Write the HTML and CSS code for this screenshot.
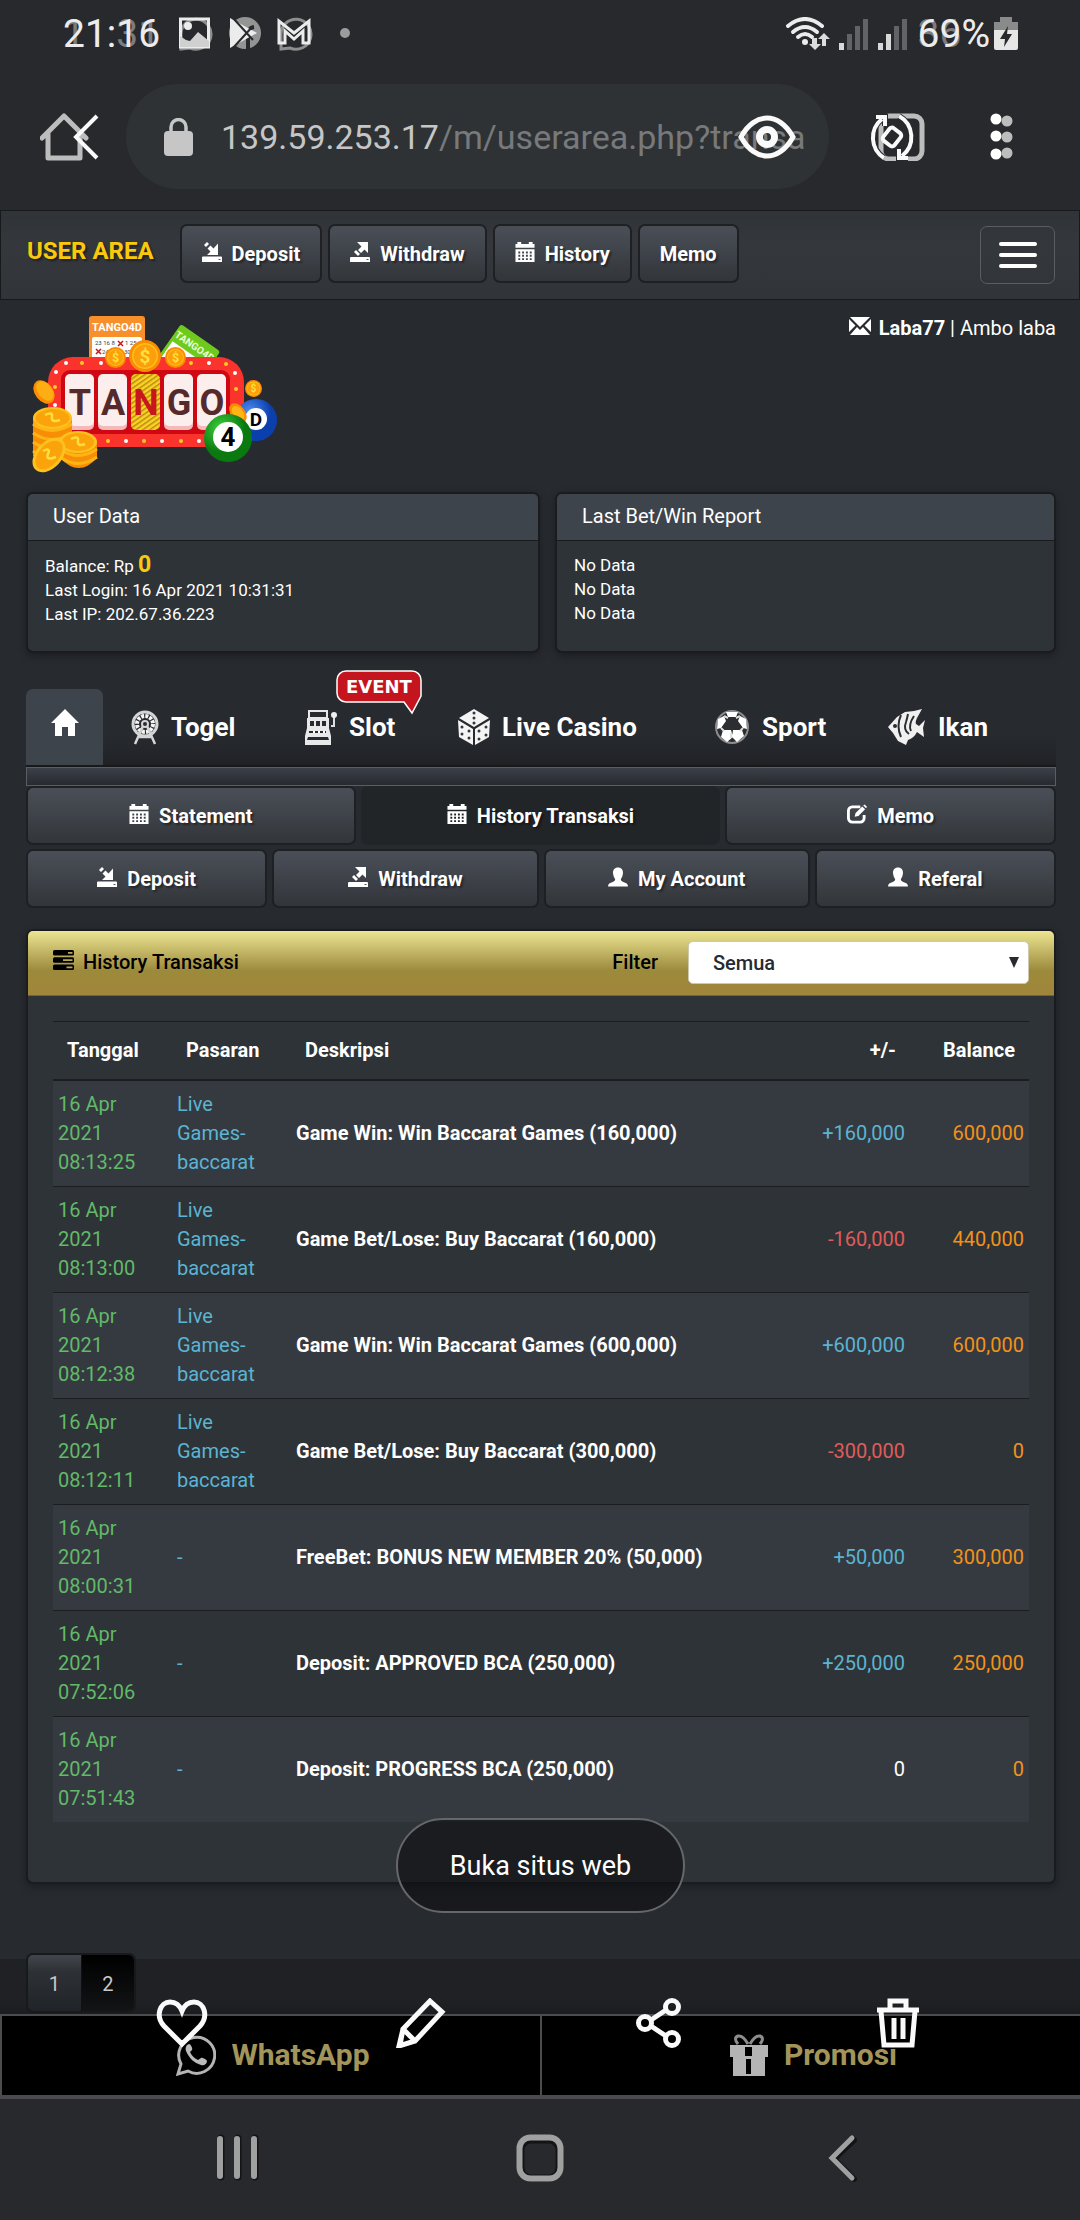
FILE: index.html
```html
<!DOCTYPE html>
<html lang="id">
<head>
    <meta charset="UTF-8">
    <meta name="viewport" content="width=device-width, initial-scale=1.0">
    <title>History Transaksi</title>
    <link rel="stylesheet" href="styles.css">
</head>
<body>
    <!-- icon set -->
    <svg class="icon-set" aria-hidden="true">
        <symbol id="i-deposit" viewBox="0 0 20 20">
            <path d="M1 14.5h18a1 1 0 0 1 1 1V20H0v-4.500a1 1 0 0 1 1-1zM16 1.500V13H5l3.500-3.500L5.500 6.500l3-3 3 3z"/>
            <path d="M2 3l3-3 2 2-3 3z"/><path d="M16.500 17h2v1h-2z" fill="#555"/>
        </symbol>
        <symbol id="i-withdraw" viewBox="0 0 20 20">
            <path d="M1 15h18a1 1 0 0 1 1 1v4H0v-4a1 1 0 0 1 1-1zM7 0h11v11l-3.500-3.500-3.500 3.500-3-3 3.500-3.500z"/>
            <path d="M4 10l2-2 4 4-2 2z"/><path d="M16.500 17h2v1h-2z" fill="#555"/>
        </symbol>
        <symbol id="i-calendar" viewBox="0 0 20 21">
            <path d="M0 2h2V0h4v2h8V0h4v2h2v4H0z"/><path fill-rule="evenodd" d="M0 7.500h20V21H0zM3 10v2h2v-2zM7 10v2h2v-2zM11 10v2h2v-2zM15 10v2h2v-2zM3 13.500v2h2v-2zM7 13.500v2h2v-2zM11 13.500v2h2v-2zM15 13.500v2h2v-2zM3 17v2h2v-2zM7 17v2h2v-2zM11 17v2h2v-2zM15 17v2h2v-2z"/>
        </symbol>
        <symbol id="i-edit" viewBox="0 0 21 20">
            <path d="M14 2.500H5.500a4 4 0 0 0-4 4v8a4 4 0 0 0 4 4H14a4 4 0 0 0 4-4V11" fill="none" stroke="currentColor" stroke-width="3"/>
            <path d="M8 13l1-4 7-7 3 3-7 7zM17 1l1.500-1L21 2.500 20 4z"/>
        </symbol>
        <symbol id="i-user" viewBox="0 0 21 20">
            <path d="M10.500 0c3.500 0 5.500 2.500 5.200 6-.3 3-1.200 4.500-2.200 6.200 0 1.800.5 2.300 2.500 3 3 1 5 1.800 5 4.800H0c0-3 2-3.800 5-4.800 2-.7 2.500-1.200 2.500-3C6.500 10.500 5.600 9 5.300 6 5 2.500 7 0 10.500 0z"/>
        </symbol>
        <symbol id="i-tasks" viewBox="0 0 21 20">
            <rect width="21" height="5.500" rx="1.500"/><rect y="7.200" width="21" height="5.500" rx="1.500"/><rect y="14.500" width="21" height="5.500" rx="1.500"/>
            <path d="M15 2h4.500v1.800H15zM10 9.200h9.500V11H10zM13.500 16.500h6v1.800h-6z" fill="#b5a75a"/>
        </symbol>
    </svg>

    <header class="phone-top">
        <div class="status">
            <span class="overlap time"><span class="ghost">11:31</span><span>21:16</span></span>
            <svg class="status-icons" viewBox="0 0 180 36">
                <g fill="none" stroke="#8e8e8e" stroke-width="3"><path d="M5 33V19a15 15 0 1 1 9 13z"/><path d="M105 33V19a15 15 0 1 1 9 13z"/></g>
                <path d="M4.500 3h28v28h-28z" fill="none" stroke="#ececec" stroke-width="3"/>
                <circle cx="12" cy="10" r="4" fill="#ececec"/><path d="M4 31V20l6 4 4 1 8-9 11 9v6z" fill="#d0d0d0"/>
                <circle cx="69" cy="17" r="16" fill="#949494"/><path d="M72 33V22q-1-10 6-11" stroke="#28292d" stroke-width="4" fill="none"/>
                <path d="M54 2l27 15-27 15z" fill="#ececec"/><path d="M57 2l20 22M57 32l20-22" stroke="#28292d" stroke-width="2"/>
                <path d="M103 27V5l15 12 15-12v22h-6V15l-9 8-9-8v12z" fill="none" stroke="#ececec" stroke-width="3"/>
                <circle cx="169" cy="17" r="5" fill="#9c9c9c"/>
            </svg>
            <svg class="status-right" viewBox="0 0 122 34">
                <g fill="none" stroke="#ececec" stroke-width="4" stroke-linecap="round"><path d="M2 9q17-14 34 0"/><path d="M7 15q12-10 24 0"/><path d="M12 20q7-6 14 0"/></g>
                <circle cx="19" cy="25" r="3" fill="#ececec"/>
                <path d="M26 21h5v6h4l-6 6-6-6h3zM36 29V22h-4l6-6 6 6h-4v7z" fill="#dcdcdc"/>
                <g fill="#626366"><path d="M61 17h5v16h-5zM69 9h5v24h-5zM77 2h5v31h-5zM108 9h5v24h-5zM116 2h5v31h-5z"/></g>
                <path d="M53 26h5v7h-5zM92 26h5v7h-5zM100 17h5v16h-5z" fill="#d8d8d8"/>
            </svg>
            <span class="overlap percent"><span class="ghost">36%</span><span>69%</span></span>
            <svg class="battery" viewBox="0 0 24 34">
                <path d="M6 0h12v5h6v9H0V5h6z" fill="#8a8a8a"/><path d="M0 13h24v18a2 2 0 0 1-2 2H2a2 2 0 0 1-2-2z" fill="#e6e6e6"/><path d="M14 9L6 22h5l-1 8 8-13h-5z" fill="#28292d"/>
            </svg>
        </div>
        <div class="browser">
            <a class="home" href="#" aria-label="Home">
                <svg viewBox="0 0 60 50">
                    <path d="M2 26L24 4l22 22M8 22v24h32V22" fill="none" stroke="#bdbdbd" stroke-width="5" stroke-linejoin="round" stroke-linecap="round"/>
                    <path d="M57 4L36 25l21 21" fill="none" stroke="#fafafa" stroke-width="4"/>
                </svg>
            </a>
            <div class="url">
                <svg class="lock" viewBox="0 0 29 38"><path d="M7 15V9a7.500 7.500 0 0 1 15 0v6" fill="none" stroke="#c6c6c6" stroke-width="3.500"/><rect y="13" width="29" height="25" rx="4" fill="#c6c6c6"/></svg>
                <span class="address">139.59.253.17<span class="path">/m/userarea.php?transa</span></span>
                <svg class="eye" viewBox="0 0 58 44">
                    <path d="M3 22C10 9 20 3 29 3s19 6 26 19c-7 13-17 19-26 19S10 35 3 22z" fill="none" stroke="#fafafa" stroke-width="5"/>
                    <circle cx="29" cy="22" r="7.500" fill="none" stroke="#fafafa" stroke-width="7"/>
                </svg>
            </div>
            <button class="rotate" aria-label="Tabs">
                <svg viewBox="0 0 56 48">
                    <rect x="12" y="3" width="41" height="43" rx="8" fill="none" stroke="#bdbdbd" stroke-width="5"/>
                    <path d="M13 6A24 24 0 0 0 15 45M30 3a24 24 0 0 1 3 40M7 4h9v9M39 45h-9v-9" fill="none" stroke="#28292d" stroke-width="6"/>
                    <path d="M13 6A24 24 0 0 0 15 45M30 3a24 24 0 0 1 3 40M7 4h9v9M39 45h-9v-9" fill="none" stroke="#fafafa" stroke-width="4"/>
                    <rect x="15" y="17" width="16" height="14" rx="3" transform="rotate(-52 23 24)" fill="#28292d" stroke="#fafafa" stroke-width="4"/>
                </svg>
            </button>
            <button class="more" aria-label="More">
                <svg viewBox="0 0 24 48"><g fill="#bdbdbd"><circle cx="17" cy="8" r="5.500"/><circle cx="17" cy="24" r="5.500"/><circle cx="17" cy="40" r="5.500"/></g><g fill="#fff"><circle cx="6" cy="6" r="5.500"/><circle cx="6" cy="23" r="5.500"/><circle cx="6" cy="41" r="5.500"/></g></svg>
            </button>
        </div>
    </header>

    <nav class="navbar">
        <a class="brand" href="#">USER AREA</a>
        <a class="btn" href="#"><svg><use href="#i-deposit"/></svg>Deposit</a>
        <a class="btn" href="#"><svg><use href="#i-withdraw"/></svg>Withdraw</a>
        <a class="btn" href="#"><svg><use href="#i-calendar"/></svg>History</a>
        <a class="btn" href="#">Memo</a>
        <button class="toggle" aria-label="Menu"><span></span><span></span><span></span></button>
    </nav>

    <main>
        <div class="masthead">
            <svg class="logo" viewBox="0 0 246 157" role="img" aria-label="TANGO4D">
                <defs>
                    <symbol id="coin" viewBox="-16 -16 32 32"><circle r="16" fill="#fb8c04"/><circle r="13" fill="#fbc11c"/><circle r="11.500" fill="#fd9f0b"/><text y="7" font-size="19" font-weight="700" text-anchor="middle" fill="#fee13d">$</text></symbol>
                    <radialGradient id="green" cx=".35" cy=".3"><stop offset="0" stop-color="#3fd13c"/><stop offset="1" stop-color="#0a7a10"/></radialGradient>
                    <radialGradient id="blue" cx=".35" cy=".3"><stop offset="0" stop-color="#4f8df0"/><stop offset="1" stop-color="#0b3fae"/></radialGradient>
                    <pattern id="stripes" width="4" height="4" patternUnits="userSpaceOnUse" patternTransform="rotate(-35)"><rect width="4" height="4" fill="#fbd324"/><rect width="4" height="1.500" fill="#b98a14"/></pattern>
                </defs>
                <rect x="57" width="56" height="50" rx="3" fill="#f78f2b"/>
                <text x="85" y="15" font-size="11" font-weight="700" text-anchor="middle" fill="#fff">TANGO4D</text>
                <rect x="60" y="21" width="50" height="26" rx="2" fill="#fff"/>
                <g font-size="6" fill="#444"><text x="63" y="29">23 16 8</text><text x="93" y="29">1 25</text><text x="70" y="38">24</text><text x="92" y="38">30</text></g>
                <path d="M86 25l5 5m0-5l-5 5M64 33l5 5m0-5l-5 5" stroke="#c2161e" stroke-width="1.500"/>
                <g transform="rotate(35 149 8)"><rect x="149" y="8" width="48" height="42" rx="3" fill="#6ecb1e"/><text x="173" y="22" font-size="10" font-weight="700" text-anchor="middle" fill="#eaffd8">TANGO4D</text><rect x="152" y="27" width="42" height="20" fill="#fff"/></g>
                <rect x="16" y="41" width="196" height="90" rx="25" fill="#fb332d"/>
                <rect x="29" y="54" width="169" height="64" rx="9" fill="#cf0712"/>
                <g fill="#fff"><circle cx="34" cy="47" r="2"/><circle cx="69" cy="47" r="2"/><circle cx="177" cy="47" r="2"/><circle cx="24" cy="56" r="2"/><circle cx="203" cy="57" r="2"/><circle cx="23" cy="89" r="2"/><circle cx="94" cy="125" r="2"/><circle cx="130" cy="125" r="2"/><circle cx="167" cy="125" r="2"/></g>
                <g fill="#ffc928"><circle cx="50" cy="47" r="2"/><circle cx="159" cy="47" r="2"/><circle cx="194" cy="48" r="2"/><circle cx="204" cy="73" r="2"/><circle cx="23" cy="71" r="2"/><circle cx="76" cy="125" r="2"/><circle cx="112" cy="125" r="2"/><circle cx="149" cy="125" r="2"/></g>
                <g fill="#f3b9bb"><rect x="33" y="60" width="29" height="54" rx="5"/><rect x="66" y="60" width="29" height="54" rx="5"/><rect x="132" y="60" width="29" height="54" rx="5"/><rect x="165" y="60" width="29" height="54" rx="5"/></g>
                <g fill="#fdeeee"><rect x="33" y="58" width="29" height="52" rx="5"/><rect x="66" y="58" width="29" height="52" rx="5"/><rect x="132" y="58" width="29" height="52" rx="5"/><rect x="165" y="58" width="29" height="52" rx="5"/></g>
                <rect x="99" y="58" width="29" height="56" rx="5" fill="url(#stripes)"/>
                <g class="reels" text-anchor="middle"><text x="48" y="99">T</text><text x="81" y="99">A</text><text class="hit" x="114" y="99">N</text><text x="147" y="99">G</text><text x="180" y="99">O</text></g>
                <use href="#coin" x="73" y="31" width="21" height="21"/><use href="#coin" x="133" y="31" width="21" height="21"/><use href="#coin" x="97" y="24" width="32" height="32"/>
                <use href="#coin" x="213" y="64" width="17" height="17"/>
                <ellipse cx="12" cy="76" rx="9" ry="13" transform="rotate(-38 12 76)" fill="#fb8c04"/><ellipse cx="13" cy="75" rx="7" ry="11" transform="rotate(-38 13 75)" fill="#fdae13"/>
                <circle cx="224" cy="104" r="21" fill="url(#blue)"/><circle cx="224" cy="103" r="11" fill="#fff"/><text x="224" y="110" font-size="19" font-weight="700" text-anchor="middle">D</text>
                <ellipse cx="206" cy="97" rx="7" ry="11" transform="rotate(-38 206 97)" fill="#fb8c04"/><ellipse cx="206" cy="97" rx="5" ry="8" transform="rotate(-38 206 97)" fill="#fdb515"/>
                <circle cx="196" cy="122" r="24" fill="url(#green)"/><circle cx="196" cy="121" r="15" fill="#fff"/><text x="196" y="130" font-size="26" font-weight="700" text-anchor="middle">4</text>
                <path d="M1 102h39v38H1z" fill="#f88e05"/><path d="M1 108q19 13 39 0M1 117q19 13 39 0M1 126q19 13 39 0M1 135q19 13 39 0" fill="none" stroke="#fdb515" stroke-width="3"/>
                <ellipse cx="20.500" cy="102" rx="19.500" ry="11" fill="#fdc21e"/><ellipse cx="20.500" cy="102" rx="17" ry="9" fill="#fba30a"/><path d="M13 99q8-4 7 2t8 3" fill="none" stroke="#fede3b" stroke-width="2.500"/>
                <path d="M28 126h37v16q-18 20-37 0z" fill="#f88e05"/><path d="M28 133q18 13 37 0M28 141q18 13 37 0" fill="none" stroke="#fdb515" stroke-width="3"/>
                <ellipse cx="46" cy="126" rx="19" ry="11" fill="#fdc21e"/><ellipse cx="46" cy="126" rx="16" ry="9" fill="#fba30a"/><path d="M39 123q8-4 7 2t7 3" fill="none" stroke="#fede3b" stroke-width="2.500"/>
                <ellipse cx="17" cy="139" rx="13" ry="20" transform="rotate(42 17 139)" fill="#fdc21e"/><ellipse cx="17" cy="139" rx="10" ry="17" transform="rotate(42 17 139)" fill="#fba30a"/><path d="M11 135q8-4 5 3t8 3" fill="none" stroke="#fede3b" stroke-width="2.500"/>
            </svg>
            <div class="account">
                <svg viewBox="0 0 22 18"><path d="M1 0h20L11 10zM0 2l6.500 6.500L0 15zM22 2v13l-6.500-6.500zM1 18l7-8 3 3 3-3 7 8z"/></svg>
                <strong>Laba77</strong> | Ambo laba
            </div>
        </div>

        <div class="info">
            <section class="card">
                <h2>User Data</h2>
                <p>Balance: Rp <b class="amount">0</b><br>Last Login: 16 Apr 2021 10:31:31<br>Last IP: 202.67.36.223</p>
            </section>
            <section class="card">
                <h2>Last Bet/Win Report</h2>
                <p>No Data<br>No Data<br>No Data</p>
            </section>
        </div>

        <nav class="tabs">
            <a class="tab active" href="#" aria-label="Home"><svg viewBox="0 0 28 27" width="28" height="27"><path d="M14 0l14 14h-4v13h-7v-9h-6v9H4V14H0z" fill="#fff"/></svg></a>
            <a class="tab" href="#">
                <svg viewBox="0 0 28 35" width="28" height="35" fill="none" stroke="#d5d5d5"><circle cx="14" cy="14" r="12" stroke-width="3"/><circle cx="14" cy="14" r="8" stroke="#f5f5f5" stroke-width="4" stroke-dasharray="3 1.200"/><circle cx="14" cy="14" r="3" stroke-width="2"/><path d="M12 16L4 34M16 16l8 18M7 27h14" stroke-width="2.500"/></svg>Togel
            </a>
            <a class="tab" href="#">
                <svg viewBox="0 0 32 35" width="32" height="35"><path fill-rule="evenodd" fill="#e8e8e8" d="M3 0h20v8h1v10l2 8v9H0v-9l2-8V8h1zM5 2v5h16V2zM5 11v5h4v-5zM11 11v5h4v-5zM17 11v5h4v-5zM4 21v2h17v-2zM3 27l-1 3h22l-1-3z"/><path d="M26 16h3V6" stroke="#ddd" stroke-width="2" fill="none"/><circle cx="29" cy="5" r="3" fill="#eee"/><path d="M8 22h2M13 22h2M18 22h2" stroke="#fff" stroke-width="2"/></svg>Slot
                <span class="event"><svg viewBox="0 0 88 46"><path d="M11 1h66a9 9 0 0 1 9 9v16l-9 17-8-11H11a9 9 0 0 1-9-9V10a9 9 0 0 1 9-9z" fill="#c4151f" stroke="#fff" stroke-width="1.500"/></svg><b>EVENT</b></span>
            </a>
            <a class="tab" href="#">
                <svg viewBox="0 0 32 36" width="32" height="36"><path d="M16 0l15 9-15 9L1 9zM0 11l15 9v16L1 28zM32 11l-15 9v16l14-8z" fill="#f4f4f4"/><g fill="#33363b"><circle cx="16" cy="4" r="1.500"/><circle cx="16" cy="9" r="1.500"/><circle cx="16" cy="14" r="1.500"/><circle cx="4" cy="18" r="1.500"/><circle cx="11" cy="22" r="1.500"/><circle cx="4" cy="25" r="1.500"/><circle cx="11" cy="29" r="1.500"/><circle cx="21" cy="22" r="1.500"/><circle cx="28" cy="18" r="1.500"/><circle cx="21" cy="30" r="1.500"/><circle cx="28" cy="26" r="1.500"/></g></svg>Live Casino
            </a>
            <a class="tab" href="#">
                <svg viewBox="0 0 36 36" width="36" height="36"><circle cx="18" cy="18" r="16" fill="#2b2d31" stroke="#8b8d90" stroke-width="2"/><path d="M12 3h12l-2 5h-8zM4 10l6-3 2 5-5 7-4 1zM32 10l-6-3-2 5 5 7 4 1zM9 21h8l2 7-6 5-6-5zM19 21h9l2 6-7 6-5-5z" fill="#fff"/><path d="M10 7l4 2M26 7l-4 2M17 24v5M7 19l3 3M29 19l-3 3" stroke="#ddd" stroke-width="2"/></svg>Sport
            </a>
            <a class="tab" href="#">
                <svg viewBox="0 0 38 36" width="38" height="36">
                    <path d="M0 18L9 8l8-5 9-1 8-2-5 9q-2 4-1 6l3 2 6-6-2 8 1 9-7-5q-3 6-9 8l-2 5-8-4-5-8z" fill="#f0f0f0"/>
                    <path d="M13 6q-5 11 0 22M20 5q-1 5-2 8-3 8 3 12M26 7q-6 9-3 15" stroke="#2b2d31" stroke-width="2" fill="none"/>
                    <circle cx="7" cy="17" r="2" fill="#2b2d31"/>
                </svg>Ikan
            </a>
        </nav>
        <div class="strip"></div>

        <div class="menu three">
            <a class="btn" href="#"><svg><use href="#i-calendar"/></svg>Statement</a>
            <a class="btn current" href="#"><svg><use href="#i-calendar"/></svg>History Transaksi</a>
            <a class="btn" href="#"><svg><use href="#i-edit"/></svg>Memo</a>
        </div>
        <div class="menu four">
            <a class="btn" href="#"><svg><use href="#i-deposit"/></svg>Deposit</a>
            <a class="btn" href="#"><svg><use href="#i-withdraw"/></svg>Withdraw</a>
            <a class="btn" href="#"><svg><use href="#i-user"/></svg>My Account</a>
            <a class="btn" href="#"><svg><use href="#i-user"/></svg>Referal</a>
        </div>

        <section class="history">
            <div class="history-head">
                <h2><svg><use href="#i-tasks"/></svg>History Transaksi</h2>
                <label for="filter">Filter</label>
                <div class="select"><select id="filter"><option>Semua</option><option>Deposit</option><option>Withdraw</option></select><span class="arrow"></span></div>
            </div>
            <div class="history-body">
                <table>
                    <thead>
                        <tr><th>Tanggal</th><th>Pasaran</th><th>Deskripsi</th><th class="num">+/-</th><th class="num">Balance</th></tr>
                    </thead>
                    <tbody>
                        <tr><td class="date">16 Apr 2021 08:13:25</td><td class="market">Live Games-baccarat</td><td class="desc">Game Win: Win Baccarat Games (160,000)</td><td class="num plus">+160,000</td><td class="num bal">600,000</td></tr>
                        <tr><td class="date">16 Apr 2021 08:13:00</td><td class="market">Live Games-baccarat</td><td class="desc">Game Bet/Lose: Buy Baccarat (160,000)</td><td class="num minus">-160,000</td><td class="num bal">440,000</td></tr>
                        <tr><td class="date">16 Apr 2021 08:12:38</td><td class="market">Live Games-baccarat</td><td class="desc">Game Win: Win Baccarat Games (600,000)</td><td class="num plus">+600,000</td><td class="num bal">600,000</td></tr>
                        <tr><td class="date">16 Apr 2021 08:12:11</td><td class="market">Live Games-baccarat</td><td class="desc">Game Bet/Lose: Buy Baccarat (300,000)</td><td class="num minus">-300,000</td><td class="num bal">0</td></tr>
                        <tr><td class="date">16 Apr 2021 08:00:31</td><td class="market">-</td><td class="desc">FreeBet: BONUS NEW MEMBER 20% (50,000)</td><td class="num plus">+50,000</td><td class="num bal">300,000</td></tr>
                        <tr><td class="date">16 Apr 2021 07:52:06</td><td class="market">-</td><td class="desc">Deposit: APPROVED BCA (250,000)</td><td class="num plus">+250,000</td><td class="num bal">250,000</td></tr>
                        <tr><td class="date">16 Apr 2021 07:51:43</td><td class="market">-</td><td class="desc">Deposit: PROGRESS BCA (250,000)</td><td class="num">0</td><td class="num bal">0</td></tr>
                    </tbody>
                </table>
            </div>
            <button class="open-site">Buka situs web</button>
        </section>
    </main>

    <div class="pager-band">
        <div class="pager"><a href="#">1</a><a class="on" href="#">2</a></div>
    </div>

    <div class="contact">
        <a href="#"><svg viewBox="0 0 40 42"><path d="M2 40l3-10A18 18 0 1 1 12 37z" fill="none" stroke="#b4b4b4" stroke-width="3"/><path d="M13 10c-3 1-4 4-3 7 3 7 8 12 15 14 3 1 6-1 6-4 0-1-5-4-6-3l-3 2c-4-2-6-4-8-8l2-2c1-1-1-6-3-6z" fill="#bbb"/></svg>WhatsApp</a>
        <a href="#"><svg viewBox="0 0 38 42"><path fill-rule="evenodd" fill="#b4b4b4" d="M0 11h38v12h-3v19H3V23H0zM15 13v9h7v-9zM16 25v15h5V25z"/><path d="M18 10Q13 1 8 2q-5 2 0 8M20 10Q25 1 30 2q5 2 0 8" fill="none" stroke="#8d8d8d" stroke-width="3"/></svg>Promosi</a>
        <div class="actions">
            <button aria-label="Favorit"><svg viewBox="0 0 52 50"><path d="M26 46L8 28C-1 18 4 4 14 4c6 0 10 4 12 9 2-5 6-9 12-9 10 0 15 14 6 24z"/></svg></button>
            <button aria-label="Edit"><svg viewBox="0 0 52 50"><path d="M35 3l12 11-27 29-16 5 4-17zM8 31l12 12M8 31L5 47"/></svg></button>
            <button aria-label="Bagikan"><svg viewBox="0 0 52 50"><circle cx="12" cy="25" r="6.500"/><circle cx="39" cy="9" r="6.500"/><circle cx="39" cy="41" r="6.500"/><path d="M18 22l15-10M18 28l15 10"/></svg></button>
            <button aria-label="Hapus"><svg viewBox="0 0 52 50"><path d="M5 12h42M18 11V3h16v8M9 13l3 34h28l3-34M22 20v21M31 20v21"/></svg></button>
        </div>
    </div>

    <footer class="softkeys">
        <button aria-label="Recents"><svg viewBox="0 0 48 48"><path d="M7 4v39M24 4v39M41 4v39" stroke="#141416" stroke-width="7"/><path d="M6 5v37M23 5v37M40 5v37" stroke="#a0a0a0" stroke-width="6"/></svg></button>
        <button aria-label="Home"><svg viewBox="0 0 48 48"><rect x="5" y="6" width="38" height="38" rx="10" stroke="#141416" stroke-width="7"/><rect x="3.500" y="3.500" width="41" height="41" rx="11" stroke="#a0a0a0" stroke-width="6"/></svg></button>
        <button aria-label="Back"><svg viewBox="0 0 48 48"><path d="M36 6L16 25l20 20" stroke="#141416" stroke-width="6"/><path d="M34 4L14 24l20 20" stroke="#a0a0a0" stroke-width="5"/></svg></button>
    </footer>
</body>
</html>
```
FILE: styles.css
```css
* {
    box-sizing: border-box;
}
body {
    margin: 0;
    background: #272a2f;
    color: #fff;
    font-family: Roboto, "Liberation Sans", sans-serif;
    font-size: 20px;
    line-height: 24px;
}
a {
    color: inherit;
    text-decoration: none;
}
button {
    background: none;
    border: none;
    padding: 0;
    color: inherit;
    font: inherit;
    cursor: pointer;
}
svg {
    display: block;
    flex: none;
}
h2, p {
    margin: 0;
}
.icon-set {
    display: none;
}

/* phone bars */
.phone-top {
    background: #28292d;
}
.status {
    display: flex;
    align-items: center;
    height: 68px;
    padding: 0 62px 0 63px;
    font-size: 39px;
    color: #ececec;
}
.overlap {
    display: grid;
    line-height: 48px;
}
.overlap span {
    grid-area: 1 / 1;
}
.overlap .ghost {
    color: #7c7c7e;
}
.status-icons {
    width: 180px;
    height: 36px;
    margin-left: 16px;
}
.status-right {
    width: 122px;
    height: 34px;
    margin-left: auto;
}
.percent {
    margin: 0 4px 0 10px;
}
.battery {
    width: 24px;
    height: 34px;
}
.browser {
    display: flex;
    align-items: center;
    padding: 16px 66px 21px 40px;
}
.home svg {
    width: 60px;
    height: 50px;
}
.url {
    position: relative;
    display: flex;
    flex: 1;
    align-items: center;
    gap: 28px;
    height: 105px;
    margin: 0 40px 0 26px;
    padding-left: 38px;
    border-radius: 53px;
    background: #2e3235;
    font-size: 34px;
    color: #c6c6c6;
    line-height: 44px;
    white-space: nowrap;
}
.lock {
    width: 29px;
    height: 38px;
}
.path {
    color: #77797b;
}
.eye {
    position: absolute;
    right: 33px;
    width: 58px;
    height: 44px;
}
.rotate svg {
    width: 56px;
    height: 48px;
}
.more {
    margin-left: 65px;
}
.more svg {
    width: 24px;
    height: 48px;
}

/* navbar */
.navbar {
    display: flex;
    gap: 6px;
    padding: 13px 24px 15px 26px;
    border: 1px solid #17191b;
    background: linear-gradient(#303438, #34373c 40%, #313438);
}
.brand {
    margin: 15px 20px 0 0;
    color: #f9c90e;
    font-size: 24px;
    font-weight: 700;
    text-shadow: 2px 2px 2px rgba(0, 0, 0, .4);
}
.btn {
    display: flex;
    align-items: center;
    justify-content: center;
    height: 59px;
    gap: 10px;
    padding: 0 20px;
    border: 2px solid #1e2024;
    border-radius: 7px;
    background: linear-gradient(#4a4e57, #3c4046 60%, #323539);
    font-weight: 700;
    text-shadow: 2px 2px 2px rgba(0, 0, 0, .4);
}
.btn svg {
    width: 20px;
    height: 20px;
    margin-bottom: 4px;
    fill: #fff;
}
.toggle {
    display: grid;
    gap: 7px;
    align-content: center;
    justify-content: center;
    width: 75px;
    height: 58px;
    margin: 2px 0 0 auto;
    border: 1px solid #5a5d61;
    border-radius: 7px;
}
.toggle span {
    width: 38px;
    height: 4px;
    border-radius: 2px;
    background: #fff;
}

/* logo row and info cards */
main {
    padding: 0 24px 0 26px;
}
.masthead {
    display: flex;
    justify-content: space-between;
    padding: 16px 0 19px 6px;
}
.logo {
    width: 246px;
    height: 157px;
}
.reels {
    font-size: 36px;
    font-weight: 700;
    fill: #552a2b;
}
.reels .hit {
    fill: #c8161c;
}
.account {
    white-space: nowrap;
}
.account svg {
    display: inline-block;
    width: 22px;
    height: 18px;
    margin-right: 3px;
    fill: #fff;
}
.info {
    display: grid;
    grid-template-columns: 514fr 501fr;
    gap: 15px;
}
.card {
    min-height: 161px;
    border: 2px solid #1a1c1f;
    border-radius: 7px;
    background: #2e3337;
    box-shadow: 0 3px 8px rgba(0, 0, 0, .3);
}
.card h2 {
    padding: 10px 25px 12px;
    border-bottom: 1px solid #191b1e;
    border-radius: 5px 5px 0 0;
    background: #3e444c;
    font-size: 20px;
    font-weight: 400;
}
.card p {
    padding: 12px 17px;
    font-size: 17px;
}
.amount {
    color: #f9c90e;
    font-size: 23px;
}

/* game tabs */
.tabs {
    display: grid;
    grid-template-columns: 77px 174fr 153fr 256fr 174fr 196fr;
    margin-top: 36px;
    border-bottom: 2px solid #17191b;
    background: linear-gradient(#272a2f 60%, #202226);
}
.tab {
    position: relative;
    display: flex;
    align-items: center;
    gap: 12px;
    height: 76px;
    padding-left: 28px;
    font-size: 26px;
    font-weight: 700;
    white-space: nowrap;
}
.tab.active {
    justify-content: center;
    padding: 0 0 10px;
    border-radius: 7px 7px 0 0;
    background: #3e444c;
}
.event {
    position: absolute;
    left: 58px;
    top: -19px;
}
.event svg {
    width: 88px;
    height: 46px;
}
.event b {
    position: absolute;
    left: 11px;
    top: 5px;
    font: 700 18px/24px "DejaVu Sans", sans-serif;
}
.strip {
    height: 19px;
    border: 1px solid #5a5d61;
    background: linear-gradient(#3c4048, #272a2f);
}

/* submenu */
.menu {
    display: grid;
    gap: 5px;
    margin-bottom: 4px;
}
.three {
    grid-template-columns: 330fr 360fr 331fr;
}
.four {
    grid-template-columns: 241fr 266fr 266fr 241fr;
}
.current {
    border-color: #222528;
    background: #222528;
}

/* history */
.history {
    position: relative;
    margin-top: 21px;
    border: 2px solid #1a1c1f;
    border-radius: 7px;
    background: #2e3337;
    box-shadow: 0 3px 8px rgba(0, 0, 0, .3);
}
.history-head {
    display: flex;
    align-items: center;
    height: 65px;
    padding: 0 25px 2px;
    border-bottom: 1px solid #8a5836;
    border-radius: 5px 5px 0 0;
    background: linear-gradient(#ece592, #9c8a3b 62%, #a0853a);
    color: #000;
    font-weight: 500;
}
.history-head h2 {
    display: flex;
    gap: 9px;
    margin-right: auto;
    font-size: 20px;
    font-weight: 500;
}
.history-head h2 svg {
    width: 21px;
    height: 20px;
}
.select {
    position: relative;
    width: 341px;
    margin-left: 30px;
}
.select select {
    display: block;
    width: 100%;
    height: 43px;
    padding: 2px 24px 0;
    appearance: none;
    border: 1px solid #ccc9b0;
    border-radius: 5px;
    background: #fff;
    color: #272a2f;
    font: 500 20px Roboto, sans-serif;
}
.arrow {
    position: absolute;
    right: 10px;
    top: 16px;
    border: 5px solid transparent;
    border-top: 11px solid #272a2f;
    border-bottom: 0;
}
.history-body {
    padding: 25px 25px 60px;
}
table {
    width: 100%;
    table-layout: fixed;
    border-collapse: separate;
    border-spacing: 0;
    line-height: 29px;
}
th, td {
    border-top: 1px solid #1b1d20;
    text-align: left;
}
th {
    width: 119px;
    padding: 14px 14px;
    border-bottom: 2px solid #1b1d20;
}
th:nth-child(3) {
    width: auto;
}
td {
    padding: 9px 5px;
}
tbody tr:first-child td {
    border-top: 0;
}
tbody tr:nth-child(odd) {
    background: #353a41;
}
.num {
    text-align: right;
}
td.date {
    padding-right: 28px;
    color: #62b968;
}
td.market, .plus {
    color: #5bb4d2;
}
.desc {
    font-weight: 700;
}
.minus {
    color: #e05c5a;
}
.bal {
    color: #f29219;
}
.open-site {
    position: absolute;
    left: 50%;
    bottom: -31px;
    width: 289px;
    height: 95px;
    margin-left: -145px;
    border: 2px solid #65676a;
    border-radius: 48px;
    background: rgba(14, 14, 17, .62);
    font-size: 27px;
}

/* page numbers */
.pager-band {
    margin-top: 75px;
    padding: 0 26px;
    background: linear-gradient(#202125 70%, #1a1b1e);
}
.pager {
    display: flex;
    width: 110px;
    height: 60px;
    position: relative;
    top: -6px;
    margin-bottom: -5px;
    border: 2px solid #17191b;
    border-radius: 7px;
    background: linear-gradient(#42464c, #2d3034 30%, #202327);
    overflow: hidden;
    color: #c8c8c8;
}
.pager a {
    flex: 1;
    line-height: 58px;
    text-align: center;
}
.pager .on {
    border-left: 1px solid #101113;
    background: linear-gradient(#000, #131416);
}

/* bottom links with the action bar above them */
.contact {
    position: relative;
    display: grid;
    grid-template-columns: 1fr 1fr;
    border-bottom: 4px solid #4a4a4f;
    background: #000;
}
.contact a {
    display: flex;
    align-items: center;
    justify-content: center;
    gap: 15px;
    height: 81px;
    padding: 0 0 2px 4px;
    border: 2px solid #4c4c4e;
    border-width: 2px 0 0 2px;
    color: #a3945a;
    font-size: 30px;
    font-weight: 700;
}
.contact a svg {
    width: 40px;
    height: 42px;
}
.actions {
    position: absolute;
    inset: -16px 63px auto;
    display: grid;
    grid-template-columns: repeat(4, 1fr);
}
.actions button, .softkeys button {
    display: grid;
    justify-content: center;
}
.actions svg {
    width: 52px;
    height: 50px;
    fill: none;
    stroke: #fafafa;
    stroke-width: 5;
}
.softkeys {
    display: grid;
    grid-template-columns: repeat(3, 1fr);
    padding: 35px 87px 40px;
    background: #28292d;
}
.softkeys svg {
    width: 48px;
    height: 48px;
    fill: none;
    stroke-linecap: round;
}
```
